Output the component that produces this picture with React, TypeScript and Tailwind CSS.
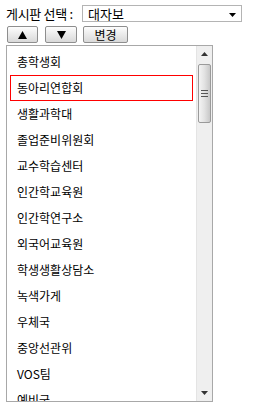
import React from "react";

const boards = [
  "총학생회",
  "동아리연합회",
  "생활과학대",
  "졸업준비위원회",
  "교수학습센터",
  "인간학교육원",
  "인간학연구소",
  "외국어교육원",
  "학생생활상담소",
  "녹색가게",
  "우체국",
  "중앙선관위",
  "VOS팀",
  "예비군",
];

const font = { fontFamily: '"Noto Sans CJK KR", "Noto Sans", sans-serif' };

function Btn({ children, className }: { children: React.ReactNode; className?: string }) {
  return (
    <button
      className={
        "flex h-[17px] items-center justify-center rounded-[2px] border border-[#8e8e8e] bg-linear-to-b from-[#fdfdfd] to-[#d9d9d9] text-[12px] leading-none text-black " +
        (className ?? "")
      }
    >
      {children}
    </button>
  );
}

function Arrow({ up }: { up?: boolean }) {
  return (
    <svg width="7" height="4" viewBox="0 0 7 4">
      {up ? <path d="M3.5 0 L7 4 L0 4 Z" fill="#333" /> : <path d="M0 0 L7 0 L3.5 4 Z" fill="#333" />}
    </svg>
  );
}

export default function App() {
  return (
    <div className="h-[418px] w-[254px] bg-white pl-[6px] pt-[5px] text-black" style={font}>
      <div className="flex h-[17px] items-center">
        <span className="w-[76px] whitespace-nowrap text-[13px] leading-none tracking-[-0.3px]">게시판 선택 :</span>
        <div className="flex h-[17px] w-[160px] items-center justify-between border border-[#b4b4b4] pl-[5px] pr-[5px]">
          <span className="text-[13px] leading-none">대자보</span>
          <svg width="7" height="4" viewBox="0 0 7 4" className="mt-[2px]">
            <path d="M0 0 L7 0 L3.5 4 Z" fill="#000" />
          </svg>
        </div>
      </div>

      <div className="mt-[4px] flex">
        <Btn className="ml-[1px] w-[31px]">
          <svg width="9" height="8" viewBox="0 0 9 8">
            <path d="M4.5 0 L9 8 L0 8 Z" fill="#000" />
          </svg>
        </Btn>
        <Btn className="ml-[7px] w-[32px]">
          <svg width="9" height="8" viewBox="0 0 9 8">
            <path d="M0 0 L9 0 L4.5 8 Z" fill="#000" />
          </svg>
        </Btn>
        <Btn className="ml-[6px] w-[45px]">변경</Btn>
      </div>

      <div className="mt-[2px] flex h-[357px] w-[207px] overflow-hidden border border-[#a8a8a8]">
        <div className="flex-1 overflow-hidden pl-[3px] pr-[3px] pt-[3px]">
          {boards.map((b, i) => (
            <div
              key={b}
              className={
                "flex h-[26px] items-center border pl-[6px] text-[12px] leading-none " +
                (i === 1 ? "border-[#ff0000]" : "border-transparent")
              }
            >
              {b}
            </div>
          ))}
        </div>
        <div className="flex w-[16px] flex-col border-l border-[#e4e4e4] bg-[#efefef]">
          <div className="flex h-[16px] items-center justify-center">
            <Arrow up />
          </div>
          <div className="mx-[1px] mt-[2px] flex h-[59px] flex-col items-center justify-center gap-[2px] rounded-[2px] border border-[#9a9a9a] bg-linear-to-r from-[#f4f4f4] via-[#e2e2e2] to-[#c8c8c8]">
            <div className="h-[1px] w-[7px] bg-[#555]" />
            <div className="h-[1px] w-[7px] bg-[#555]" />
            <div className="h-[1px] w-[7px] bg-[#555]" />
          </div>
          <div className="flex-1" />
          <div className="flex h-[16px] items-center justify-center">
            <Arrow />
          </div>
        </div>
      </div>
    </div>
  );
}
